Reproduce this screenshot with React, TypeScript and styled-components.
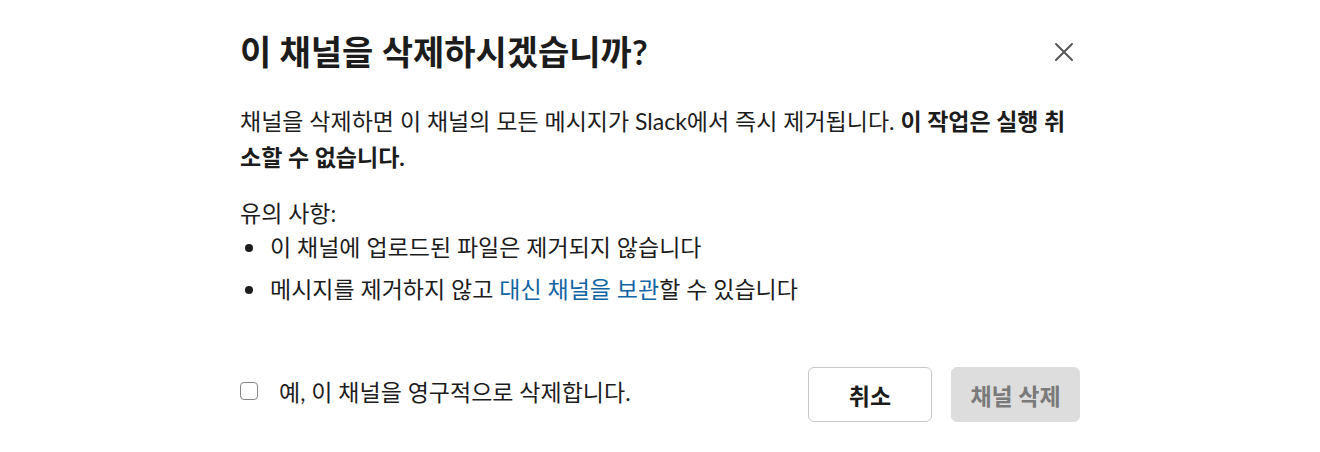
import React, { useState } from "react"
import styled, { createGlobalStyle } from "styled-components"

const GlobalStyle = createGlobalStyle`
  body {
    margin: 0;
    background: #fff;
    font-family: Lato, "Noto Sans CJK KR", sans-serif;
    color: #1d1c1d;
  }
`

const Modal = styled.div`
  width: 840px;
  margin: 0 auto;
  padding-top: 32px;
`

const Header = styled.div`
  display: flex;
  justify-content: space-between;
  align-items: center;
  height: 40px;
`

const Title = styled.h1`
  margin: 0;
  font-size: 34px;
  font-weight: 700;
  line-height: 40px;
  color: #1d1c1d;
`

const CloseButton = styled.button`
  display: flex;
  align-items: center;
  justify-content: center;
  width: 36px;
  height: 36px;
  margin-right: -2px;
  padding: 0;
  border: none;
  background: none;
  color: #555;
  cursor: pointer;
`

const Body = styled.div`
  margin-top: 31px;
  font-size: 23px;
`

const Paragraph = styled.p`
  margin: 0;
  line-height: 36px;
  b {
    font-weight: 700;
  }
`

const Notes = styled.div`
  margin-top: 21px;
  line-height: 34px;
`

const List = styled.ul`
  margin: 0;
  padding: 0;
  list-style: none;
`

const Item = styled.li<{ $gap?: number }>`
  position: relative;
  padding-left: 30px;
  margin-top: ${({ $gap }) => $gap || 0}px;
  &::before {
    content: "";
    position: absolute;
    left: 5px;
    top: 14px;
    width: 8px;
    height: 8px;
    border-radius: 50%;
    background: #1d1c1d;
  }
`

const Link = styled.a`
  color: #1264a3;
  text-decoration: none;
`

const Footer = styled.div`
  display: flex;
  align-items: center;
  justify-content: space-between;
  margin-top: 61px;
`

const CheckLabel = styled.label`
  display: flex;
  align-items: center;
  gap: 21px;
  margin-bottom: 8px;
  font-size: 23px;
  cursor: pointer;
`

const Box = styled.input`
  appearance: none;
  width: 18px;
  height: 18px;
  margin: 0;
  border: 1.5px solid #868686;
  border-radius: 4px;
  background: #fff;
  &:checked {
    background: #1264a3;
    border-color: #1264a3;
  }
`

const Actions = styled.div`
  display: flex;
  gap: 19px;
`

const Button = styled.button<{ $disabled?: boolean; $width: number }>`
  width: ${({ $width }) => $width}px;
  height: 55px;
  padding: 0;
  border-radius: 6px;
  border: 1px solid ${({ $disabled }) => ($disabled ? "#dddddd" : "#c7c7c7")};
  background: ${({ $disabled }) => ($disabled ? "#dddddd" : "#fff")};
  color: ${({ $disabled }) => ($disabled ? "#7a7a7a" : "#1d1c1d")};
  font-family: Lato, "Noto Sans CJK KR", sans-serif;
  font-size: 23px;
  font-weight: 700;
  cursor: ${({ $disabled }) => ($disabled ? "default" : "pointer")};
`

export default function App() {
  const [checked, setChecked] = useState(false)
  return (
    <>
      <GlobalStyle />
      <Modal>
        <Header>
          <Title>이 채널을 삭제하시겠습니까?</Title>
          <CloseButton aria-label="닫기">
            <svg width="20" height="20" viewBox="0 0 20 20" fill="none" stroke="currentColor" strokeWidth="2" strokeLinecap="round">
              <path d="M2 2 L18 18 M18 2 L2 18" />
            </svg>
          </CloseButton>
        </Header>
        <Body>
          <Paragraph>
            채널을 삭제하면 이 채널의 모든 메시지가 Slack에서 즉시 제거됩니다. <b>이 작업은 실행 취소할 수 없습니다.</b>
          </Paragraph>
          <Notes>
            <div>유의 사항:</div>
            <List>
              <Item>이 채널에 업로드된 파일은 제거되지 않습니다</Item>
              <Item $gap={8}>
                메시지를 제거하지 않고 <Link href="#">대신 채널을 보관</Link>할 수 있습니다
              </Item>
            </List>
          </Notes>
        </Body>
        <Footer>
          <CheckLabel>
            <Box type="checkbox" checked={checked} onChange={e => setChecked(e.target.checked)} />
            예, 이 채널을 영구적으로 삭제합니다.
          </CheckLabel>
          <Actions>
            <Button $width={124}>취소</Button>
            <Button $width={129} $disabled={!checked}>채널 삭제</Button>
          </Actions>
        </Footer>
      </Modal>
    </>
  )
}
